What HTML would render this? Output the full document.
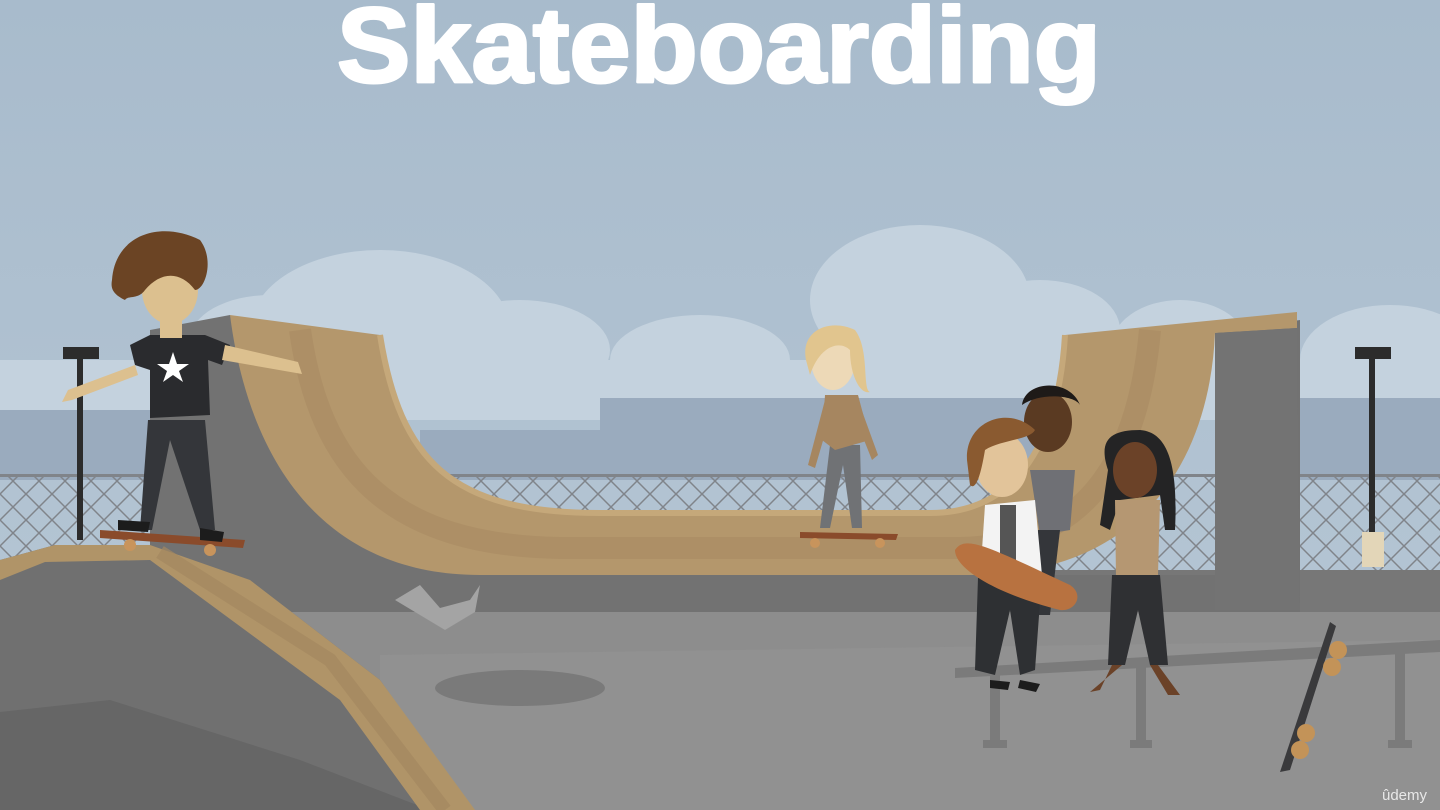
<!DOCTYPE html>
<html><head><meta charset="utf-8"><style>
html,body{margin:0;padding:0;width:1440px;height:810px;overflow:hidden;background:#aabccc}
svg{display:block}
</style></head><body>
<svg width="1440" height="810" viewBox="0 0 1440 810" xmlns="http://www.w3.org/2000/svg">
<defs>
<linearGradient id="sky" x1="0" y1="0" x2="0" y2="1">
<stop offset="0" stop-color="#a8bbcc"/><stop offset="1" stop-color="#b8c8d6"/>
</linearGradient>
<pattern id="fence" width="26" height="26" patternUnits="userSpaceOnUse">
<path d="M0 0L26 26M26 0L0 26" stroke="#80848a" stroke-width="1.5" fill="none"/>
</pattern>
</defs>
<rect width="1440" height="810" fill="url(#sky)"/>
<g fill="#c4d2de">
<ellipse cx="380" cy="330" rx="130" ry="80"/>
<ellipse cx="270" cy="340" rx="80" ry="45"/>
<ellipse cx="520" cy="350" rx="90" ry="50"/>
<ellipse cx="700" cy="360" rx="90" ry="45"/>
<ellipse cx="920" cy="300" rx="110" ry="75"/>
<ellipse cx="1040" cy="330" rx="80" ry="50"/>
<ellipse cx="1180" cy="350" rx="70" ry="50"/>
<ellipse cx="1390" cy="360" rx="90" ry="55"/>
<ellipse cx="30" cy="400" rx="60" ry="25"/>
<rect x="0" y="360" width="1440" height="60"/>
</g>
<g fill="#9aabbe">
<rect x="0" y="410" width="150" height="70"/>
<rect x="420" y="430" width="200" height="50"/>
<rect x="600" y="398" width="140" height="82"/>
<rect x="740" y="398" width="330" height="82"/>
<rect x="1290" y="398" width="150" height="82"/>
</g>
<rect x="0" y="475" width="1440" height="100" fill="url(#fence)"/>
<rect x="0" y="474" width="1440" height="3" fill="#80848a"/>
<rect x="0" y="570" width="1440" height="45" fill="#777"/>
<rect x="0" y="612" width="1440" height="198" fill="#8d8d8d"/>
<path d="M380 655 L1440 640 L1440 810 L380 810Z" fill="#919191"/>
<!-- halfpipe grey -->
<path d="M150 330 L230 315 L480 575 L1215 575 L1215 333 L1300 320 L1300 612 L150 612 Z" fill="#727272"/>
<!-- halfpipe tan -->
<path d="M230 315 L380 335 C400 460 450 513 600 513 L930 513 C1030 513 1060 420 1065 335 L1297 312 L1297 328 L1215 333 C1210 450 1150 575 970 575 L480 575 C330 575 250 470 230 315 Z" fill="#b4976c"/>
<path d="M300 330 C320 470 390 545 560 548 L960 548 C1100 545 1140 440 1150 330" fill="none" stroke="#a88b63" stroke-width="22" opacity="0.6"/>
<path d="M380 335 C400 460 450 513 600 513 L930 513 C1030 513 1060 420 1065 335" fill="none" stroke="#c5a87a" stroke-width="6"/>
<path d="M1215 333 L1297 328 L1300 610 L1215 610Z" fill="#737373"/>
<g fill="#2c2c2c">
<rect x="77" y="350" width="6" height="190"/><rect x="63" y="347" width="36" height="12"/>
<rect x="1369" y="350" width="6" height="185"/><rect x="1355" y="347" width="36" height="12"/>
</g>
<rect x="1362" y="532" width="22" height="35" fill="#e3d6b8"/>
<!-- left front ramp -->
<path d="M0 560 L55 545 L150 545 L250 580 L380 680 L472 810 L0 810Z" fill="#707070"/>
<path d="M0 712 L110 700 L300 760 L430 810 L0 810Z" fill="#666"/>
<path d="M0 560 L55 545 L150 545 L250 580 L380 680 L475 810 L420 810 L340 700 L150 560 L45 562 L0 580Z" fill="#b09468"/>
<path d="M160 552 L330 660 L445 810" fill="none" stroke="#a48860" stroke-width="14" opacity="0.7"/>
<ellipse cx="520" cy="688" rx="85" ry="18" fill="#7a7a7a"/>
<path d="M395 600 L420 585 L440 608 L470 600 L480 585 L475 612 L445 630 Z" fill="#a4a4a4"/>
<g fill="#7b7b7b">
<path d="M955 668 L1440 640 L1440 652 L955 678Z"/>
<rect x="990" y="672" width="10" height="72"/><rect x="983" y="740" width="24" height="8"/>
<rect x="1136" y="660" width="10" height="84"/><rect x="1130" y="740" width="22" height="8"/>
<rect x="1395" y="648" width="10" height="94"/><rect x="1388" y="740" width="24" height="8"/>
</g>
<!-- left skater -->
<g>
<path d="M100 530 L245 540 L243 548 L100 538Z" fill="#8a4b2b"/>
<circle cx="130" cy="545" r="6" fill="#c8945c"/><circle cx="210" cy="550" r="6" fill="#c8945c"/>
<path d="M148 420 L140 530 L152 530 L170 440 L200 530 L215 530 L205 420Z" fill="#34363a"/>
<path d="M130 345 L150 335 L205 335 L230 345 L222 365 L208 360 L210 415 L150 418 L150 370 L135 365Z" fill="#2a2b2e"/>
<polygon points="173,352 177,364 189,364 179,371 183,382 173,375 163,382 167,371 157,364 169,364" fill="#fff"/>
<path d="M225 345 L298 362 L302 374 L222 360Z" fill="#dcc08f"/>
<path d="M135 365 L68 390 L62 402 L72 400 L138 375Z" fill="#dcc08f"/>
<rect x="160" y="310" width="22" height="28" fill="#dcc08f"/>
<ellipse cx="170" cy="290" rx="28" ry="34" fill="#dcc08f"/>
<path d="M112 280 C115 235 160 220 200 240 C215 260 205 290 195 290 C180 270 160 272 145 290 C138 300 128 295 125 300 C115 295 110 290 112 280Z" fill="#6b4424"/>
<path d="M118 520 L150 522 L148 532 L118 530Z M200 528 L224 532 L222 542 L200 540Z" fill="#1c1c1c"/>
</g>
<!-- blonde skater -->
<g>
<path d="M800 532 L898 534 L896 540 L800 538Z" fill="#8a4b2b"/>
<circle cx="815" cy="543" r="5" fill="#c8945c"/><circle cx="880" cy="543" r="5" fill="#c8945c"/>
<path d="M830 445 L820 528 L830 528 L843 465 L852 528 L862 528 L860 445Z" fill="#707275"/>
<path d="M825 395 L858 395 L870 440 L835 450 L822 440Z" fill="#a68660"/>
<path d="M825 400 L808 465 L815 468 L832 410Z M858 400 L878 455 L872 460 L852 410Z" fill="#a68660"/>
<ellipse cx="833" cy="360" rx="22" ry="30" fill="#edd9b7"/>
<path d="M806 360 C800 330 830 318 855 330 C870 350 862 390 870 392 C860 395 850 375 850 350 C840 340 820 345 810 375Z" fill="#e1c58e"/>
</g>
<!-- group right -->
<g>
<path d="M1030 470 L1075 470 L1070 530 L1040 535Z" fill="#6f7075"/>
<ellipse cx="1048" cy="422" rx="24" ry="30" fill="#5a3a22"/>
<path d="M1022 405 C1025 380 1070 378 1080 405 C1075 395 1040 392 1022 405Z" fill="#1e1a18"/>
<path d="M1038 530 L1035 615 L1050 615 L1060 530Z" fill="#34363a"/>
<path d="M1108 470 C1098 440 1110 430 1140 430 C1170 432 1178 470 1175 530 L1165 530 L1160 495 L1120 500 L1110 530 L1100 525Z" fill="#242425"/>
<ellipse cx="1135" cy="470" rx="22" ry="28" fill="#6b4228"/>
<path d="M1115 500 L1160 500 L1158 575 L1116 578Z" fill="#b59772"/>
<path d="M1112 575 L1160 575 L1168 665 L1150 665 L1138 610 L1125 665 L1108 665Z" fill="#2f3033"/>
<path d="M1112 665 L1100 690 L1090 692 L1122 665Z M1158 665 L1180 695 L1168 695 L1150 665Z" fill="#6b4228"/>
<path d="M985 505 L1035 500 L1042 575 L980 580Z" fill="#f3f3f3"/>
<rect x="1000" y="505" width="16" height="70" fill="#555"/>
<path d="M978 578 L1042 575 L1035 670 L1020 675 L1010 610 L995 675 L975 670Z" fill="#2e3033"/>
<ellipse cx="1002" cy="465" rx="26" ry="32" fill="#e2c49a"/>
<path d="M967 460 C965 420 1010 405 1035 430 C1030 440 1000 440 985 450 C980 480 975 490 970 485Z" fill="#8a5a30"/>
<path d="M955 550 C965 535 985 545 1070 585 C1085 595 1075 612 1060 610 C1000 595 955 570 955 550Z" fill="#b87240"/>
<path d="M990 680 L1010 682 L1008 690 L990 688Z M1020 680 L1040 684 L1036 692 L1018 688Z" fill="#1c1c1c"/>
</g>
<path d="M1330 622 L1336 626 L1290 770 L1280 772Z" fill="#3a3a3c"/>
<g fill="#c39358"><circle cx="1338" cy="650" r="9"/><circle cx="1332" cy="667" r="9"/><circle cx="1306" cy="733" r="9"/><circle cx="1300" cy="750" r="9"/></g>
<text x="337" y="82" textLength="764" lengthAdjust="spacingAndGlyphs" font-family="Liberation Sans, sans-serif" font-weight="700" font-size="107" fill="#ffffff" stroke="#ffffff" stroke-width="3" stroke-linejoin="round">Skateboarding</text>
<text x="1382" y="800" font-family="Liberation Sans, sans-serif" font-size="15" fill="#e8e8e8">ûdemy</text>
</svg>
</body></html>
